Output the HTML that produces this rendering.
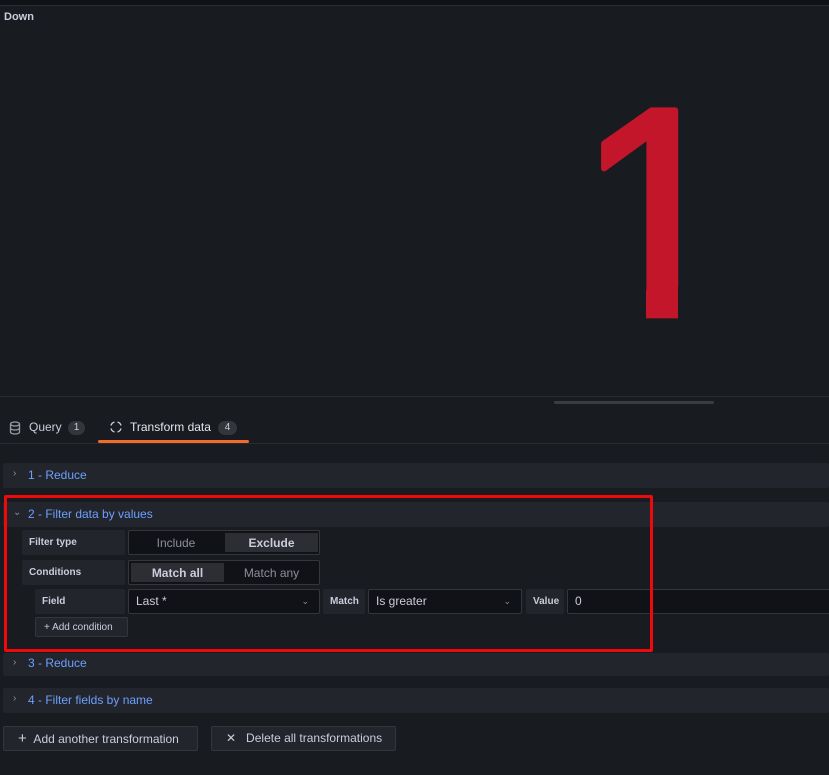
<!DOCTYPE html>
<html><head><meta charset="utf-8"><style>
*{box-sizing:border-box;margin:0;padding:0}
body{width:829px;height:775px;background:#181b1f;font-family:"Liberation Sans",sans-serif;color:#ccccdc;position:relative;overflow:hidden;font-size:12px}
.a{position:absolute}
.row{position:absolute;left:3px;right:0;height:25px;background:#22252b;border-radius:2px}
.row .t{position:absolute;left:25px;top:5px;color:#6e9fff;font-size:12px}
.row .c{position:absolute;left:10px;top:5px;color:#8e8e9a;font-size:10px}
.lbl{position:absolute;background:#22252b;font-weight:bold;font-size:10px;color:#ccccdc;padding-left:7px;line-height:25px;height:25px;border-radius:2px}
.inp{position:absolute;background:#111217;border:1px solid #34363c;height:25px;border-radius:2px;font-size:12px;color:#ccccdc;padding-left:7px;line-height:23px}
.btn{position:absolute;background:#22252b;border:1px solid #34363c;height:25px;border-radius:2px;font-size:12px;color:#ccccdc;line-height:23px}
</style></head><body>
<div class="a" style="left:0;top:0;width:829px;height:5px;background:#111217"></div>
<div class="a" style="left:0;top:5px;width:829px;height:392px;background:#181b1f;border-top:1px solid #2a2c31;border-bottom:1px solid #2a2c31"></div>
<div class="a" style="left:4px;top:11px;font-weight:bold;font-size:11px;color:#ccccdc">Down</div>
<svg class="a" style="left:0;top:0" width="829" height="397"><defs><clipPath id="cp"><rect x="0" y="0" width="829" height="286"/><rect x="646" y="0" width="32" height="319"/></clipPath></defs><g clip-path="url(#cp)"><text x="576" y="315" font-family="Liberation Sans" font-size="292" fill="#c4162a" stroke="#c4162a" stroke-width="6" stroke-linejoin="round" transform="translate(0,-6) scale(1,1.02)">1</text></g></svg>
<div class="a" style="left:554px;top:401px;width:160px;height:3px;background:#3a3c42;border-radius:2px"></div>
<svg class="a" style="left:9px;top:421px" width="12" height="14" viewBox="0 0 12 14"><ellipse cx="6" cy="3" rx="4.5" ry="2" fill="none" stroke="#9a9aa5" stroke-width="1.3"/><path d="M1.5 3v8c0 1.1 2 2 4.5 2s4.5-.9 4.5-2V3M1.5 7c0 1.1 2 2 4.5 2s4.5-.9 4.5-2" fill="none" stroke="#9a9aa5" stroke-width="1.3"/></svg>
<div class="a" style="left:29px;top:420px;font-size:12px;color:#ccccdc">Query</div>
<div class="a" style="left:68px;top:421px;width:17px;height:14px;border-radius:7px;background:#34363c;font-size:10px;text-align:center;line-height:14px">1</div>
<svg class="a" style="left:110px;top:421px" width="12" height="12" viewBox="0 0 12 12" fill="none" stroke="#ccccdc" stroke-width="1.4"><path d="M1 4.5A5 5 0 0 1 4.5 1M7.5 1A5 5 0 0 1 11 4.5M11 7.5A5 5 0 0 1 7.5 11M4.5 11A5 5 0 0 1 1 7.5"/></svg>
<div class="a" style="left:130px;top:420px;font-size:12px;color:#e6e6ee">Transform data</div>
<div class="a" style="left:218px;top:421px;width:19px;height:14px;border-radius:7px;background:#34363c;font-size:10px;text-align:center;line-height:14px">4</div>
<div class="a" style="left:98px;top:440px;width:151px;height:3px;background:#f26b2a;border-radius:2px"></div>
<div class="a" style="left:0;top:443px;width:829px;height:1px;background:#2a2c31"></div>

<div class="row" style="top:463px"><span class="c">›</span><span class="t">1 - Reduce</span></div>
<div class="row" style="top:502px"><span class="c">⌄</span><span class="t">2 - Filter data by values</span></div>
<div class="lbl" style="left:22px;top:530px;width:103px">Filter type</div>
<div class="inp" style="left:128px;top:530px;width:192px;padding:0;background:#111217"><div class="a" style="left:0;top:1px;width:94px;text-align:center;color:#8e8e9a">Include</div><div class="a" style="left:96px;top:2px;width:93px;height:19px;background:#2c2e34;text-align:center;font-weight:bold;line-height:20px">Exclude</div></div>
<div class="lbl" style="left:22px;top:560px;width:103px">Conditions</div>
<div class="inp" style="left:128px;top:560px;width:192px;padding:0"><div class="a" style="left:2px;top:2px;width:93px;height:19px;background:#2c2e34;text-align:center;font-weight:bold;line-height:20px">Match all</div><div class="a" style="left:96px;top:1px;width:93px;text-align:center;color:#8e8e9a">Match any</div></div>
<div class="lbl" style="left:35px;top:589px;width:90px">Field</div>
<div class="inp" style="left:128px;top:589px;width:192px">Last *<span class="a" style="right:10px;top:0;font-size:9px;color:#8e8e9a">⌄</span></div>
<div class="lbl" style="left:323px;top:589px;width:42px">Match</div>
<div class="inp" style="left:368px;top:589px;width:154px">Is greater<span class="a" style="right:10px;top:0;font-size:9px;color:#8e8e9a">⌄</span></div>
<div class="lbl" style="left:526px;top:589px;width:38px">Value</div>
<div class="inp" style="left:567px;top:589px;width:270px">0</div>
<div class="btn" style="left:35px;top:617px;width:93px;height:20px;line-height:19px;font-size:10px;padding-left:8px">+ Add condition</div>
<div class="a" style="left:4px;top:495px;width:649px;height:157px;border:3px solid #ee0a0a;border-radius:2px"></div>

<div class="row" style="top:653px;height:23px"><span class="c" style="top:4px">›</span><span class="t" style="top:3px">3 - Reduce</span></div>
<div class="row" style="top:688px"><span class="c">›</span><span class="t">4 - Filter fields by name</span></div>
<div class="btn" style="left:3px;top:726px;width:195px;padding-left:14px"><span style="font-size:15px">+</span>&nbsp;&nbsp;Add another transformation</div>
<div class="btn" style="left:211px;top:726px;width:185px;padding-left:14px">✕&nbsp;&nbsp;&nbsp;Delete all transformations</div>
</body></html>
